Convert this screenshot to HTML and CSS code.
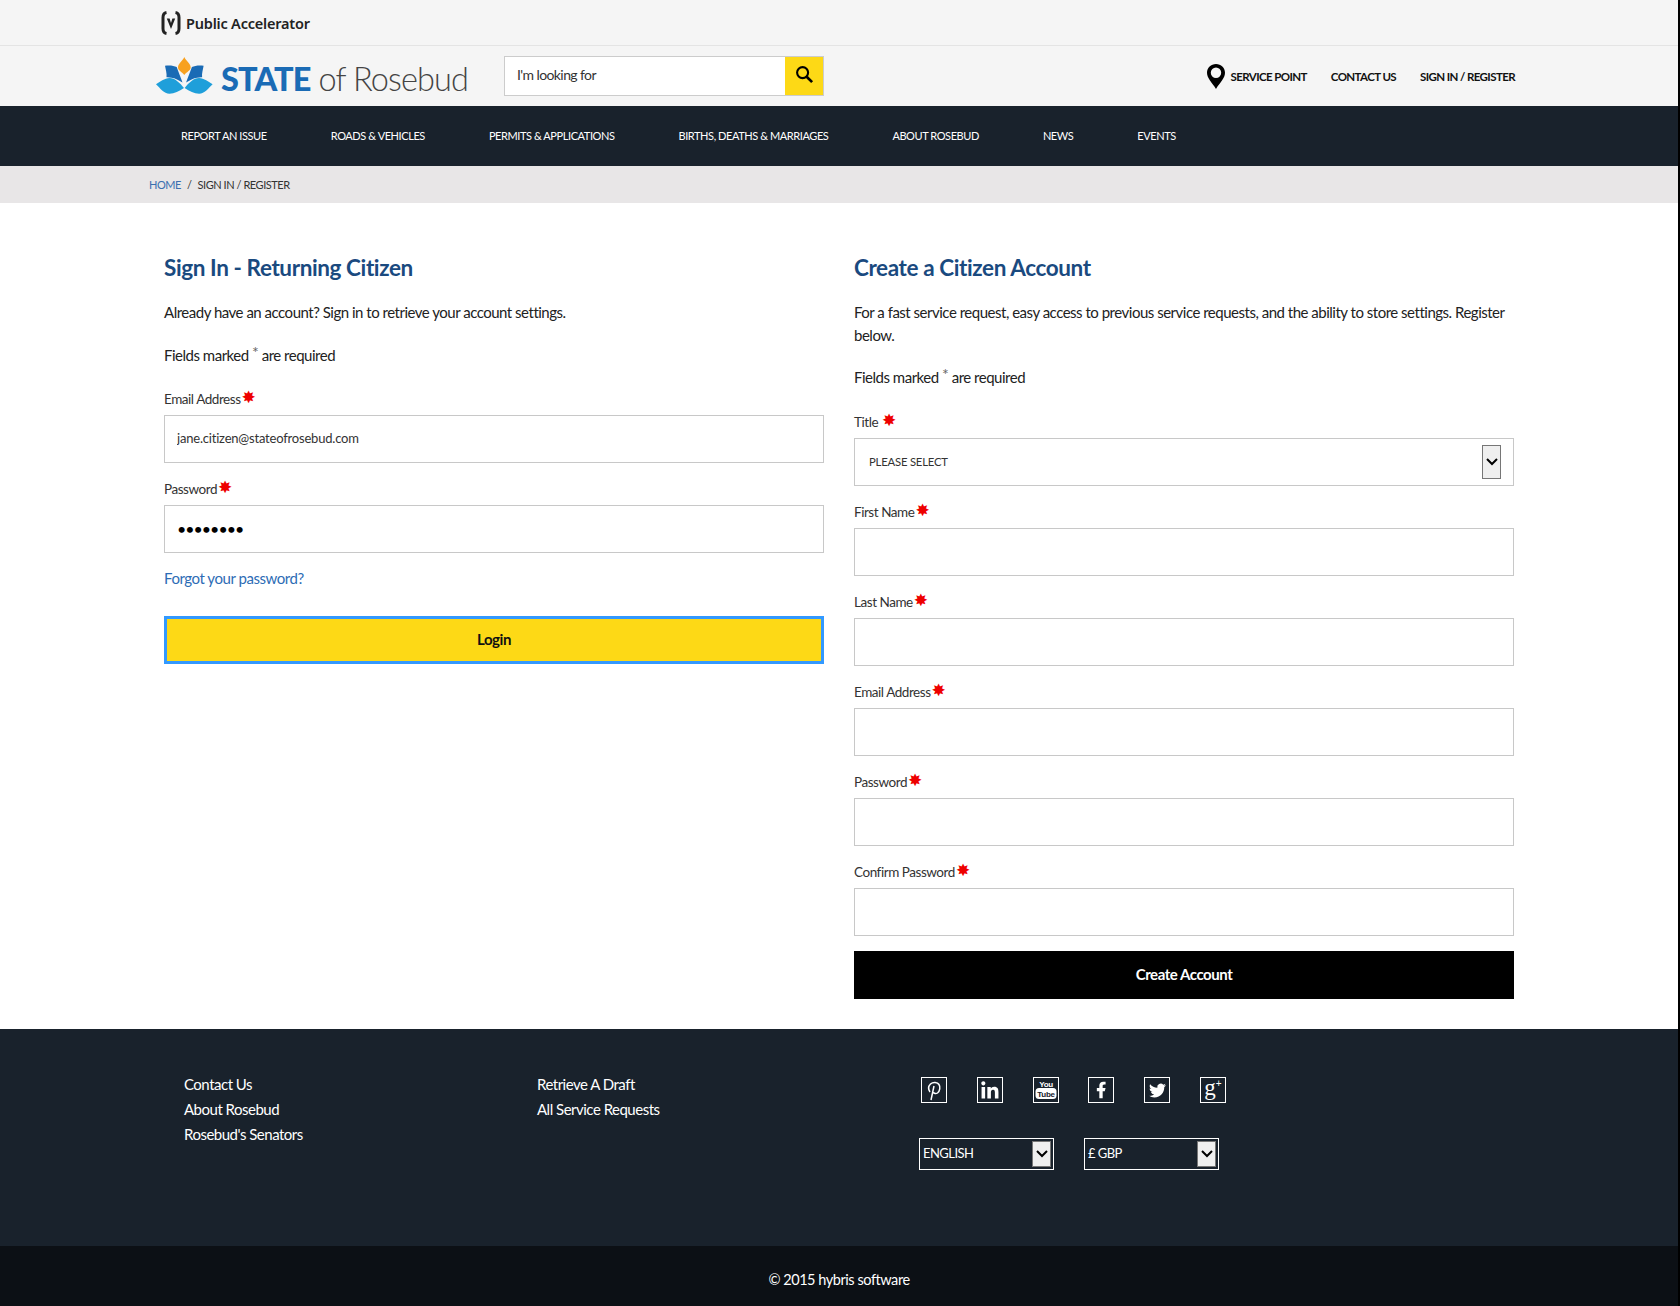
FILE: index.html
```html
<!DOCTYPE html>
<html lang="en">
<head>
  <meta charset="UTF-8" />
  <meta name="viewport" content="width=device-width, initial-scale=1.0"/>
  <title>Sign In / Register | State of Rosebud</title>
  <link rel="stylesheet" href="styles.css">
</head>
<body>
<div class="page">

  <div class="topbar">
    <div class="container">
      <a class="brand-mini" href="#">
        <svg class="brand-mini-icon" viewBox="0 0 20 24" width="20" height="24">
          <path d="M5.500 1.500C2.500 2 2 4 2 6.500v11c0 2.500 .5 4.500 3.500 5M14.500 1.500c3 .5 3.500 2.500 3.500 5v11c0 2.500-.5 4.500-3.500 5" fill="none" stroke="#222" stroke-width="3"/>
          <path d="M5.800 7.500l4.200 10.500 4.200-10.500h-2.800l-1.400 4.500-1.400-4.500z" fill="#222"/>
        </svg>
        <span>Public Accelerator</span>
      </a>
    </div>
  </div>

  <header class="header">
    <div class="container header-row">
      <a class="logo" href="#">
        <svg class="logo-mark" viewBox="0 0 58 37" width="58" height="37">
          <path d="M28.300 0C30 4 34.700 6.500 34.700 10.500 34.700 13.500 31 14.500 28.300 18 25.600 14.500 22 13.500 22 10.500 22 6.500 26.600 4 28.300 0z" fill="#f8a11f"/>
          <path d="M9 8.700C13 8 18 8.500 20.700 10c1.500 4.500 4 10 5.800 15.500C23 23.500 19 21 15.500 20.800 13.500 20.500 12 20 10.500 20.300 11 16 9.500 12 9 8.700z" fill="#1a6bb5"/>
          <path d="M47.600 8.700C43.600 8 38.600 8.500 35.900 10c-1.500 4.500-4 10-5.800 15.500 3.500-2 7.500-4.500 11-4.700 2-.3 3.500-.8 5-.5-.5-4.300 1.100-8.300 1.500-11.600z" fill="#1a6bb5"/>
          <path d="M0 27.300C4 25 8.500 21 13.500 21 19 21 24 26 28 31 23 34 18.500 36.800 13.500 36.800 8 36.800 4 31 0 27.300z" fill="#1f9fda"/>
          <path d="M56.600 27.300C52.600 25 48.100 21 43.100 21 37.600 21 32.600 26 28.600 31c5 3 9.500 5.800 14.500 5.800 5.500 0 9.500-5.800 13.500-9.500z" fill="#1f9fda"/>
        </svg>
        <span class="logo-text"><b>STATE</b> of Rosebud</span>
      </a>
      <form class="search">
        <input class="search-input" type="text" placeholder="I'm looking for" />
        <button class="search-btn" type="button" aria-label="Search">
          <svg viewBox="0 0 20 20" width="19" height="19">
            <circle cx="8" cy="8" r="5.800" fill="none" stroke="#000" stroke-width="2.200"/>
            <path d="M12.300 12.300l5.700 5.700" stroke="#000" stroke-width="2.800"/>
          </svg>
        </button>
      </form>
      <nav class="account-nav">
        <a class="service-point" href="#">
          <svg viewBox="0 0 18 25" width="18" height="25">
            <path fill-rule="evenodd" d="M9 0c5 0 9 3.800 9 8.800 0 5.500-5 9.700-9 16.200C5 18.500 0 14.300 0 8.800 0 3.800 4 0 9 0zm0 3.500a5.200 5.200 0 100 10.400A5.200 5.200 0 009 3.500z" fill="#000"/>
          </svg>
          <span>SERVICE POINT</span>
        </a>
        <a href="#">CONTACT US</a>
        <a href="#">SIGN IN / REGISTER</a>
      </nav>
    </div>
  </header>

  <nav class="main-nav">
    <div class="container main-nav-row">
      <a href="#">REPORT AN ISSUE</a>
      <a href="#">ROADS &amp; VEHICLES</a>
      <a href="#">PERMITS &amp; APPLICATIONS</a>
      <a href="#">BIRTHS, DEATHS &amp; MARRIAGES</a>
      <a href="#">ABOUT ROSEBUD</a>
      <a href="#">NEWS</a>
      <a href="#">EVENTS</a>
    </div>
  </nav>

  <div class="breadcrumb">
    <div class="container">
      <a href="#">HOME</a><span class="crumb-sep">/</span><span>SIGN IN / REGISTER</span>
    </div>
  </div>

  <main class="main container">
    <section class="col">
      <h2>Sign In - Returning Citizen</h2>
      <p>Already have an account? Sign in to retrieve your account settings.</p>
      <p>Fields marked <span class="mark">*</span> are required</p>
      <form class="form">
        <label class="field-label">Email Address<span class="req">✸</span></label>
        <input class="field" type="text" value="jane.citizen@stateofrosebud.com" />
        <label class="field-label">Password<span class="req">✸</span></label>
        <input class="field field-password" type="password" value="password" />
        <a class="forgot" href="#">Forgot your password?</a>
        <button class="btn btn-login" type="button">Login</button>
      </form>
    </section>

    <section class="col">
      <h2>Create a Citizen Account</h2>
      <p>For a fast service request, easy access to previous service requests, and the ability to store settings. Register below.</p>
      <p>Fields marked <span class="mark">*</span> are required</p>
      <form class="form">
        <label class="field-label">Title <span class="req">✸</span></label>
        <div class="field select-field">
          <span>PLEASE SELECT</span>
          <span class="arrow arrow-tall">
            <svg viewBox="0 0 12 8" width="12" height="8"><path d="M1 1l5 5 5-5" fill="none" stroke="#000" stroke-width="2"/></svg>
          </span>
        </div>
        <label class="field-label">First Name<span class="req">✸</span></label>
        <input class="field" type="text" />
        <label class="field-label">Last Name<span class="req">✸</span></label>
        <input class="field" type="text" />
        <label class="field-label">Email Address<span class="req">✸</span></label>
        <input class="field" type="text" />
        <label class="field-label">Password<span class="req">✸</span></label>
        <input class="field" type="password" />
        <label class="field-label">Confirm Password<span class="req">✸</span></label>
        <input class="field field-last" type="password" />
        <button class="btn btn-create" type="button">Create Account</button>
      </form>
    </section>
  </main>

  <footer class="footer">
    <div class="container footer-row">
      <ul class="footer-links">
        <li><a href="#">Contact Us</a></li>
        <li><a href="#">About Rosebud</a></li>
        <li><a href="#">Rosebud's Senators</a></li>
      </ul>
      <ul class="footer-links footer-links-2">
        <li><a href="#">Retrieve A Draft</a></li>
        <li><a href="#">All Service Requests</a></li>
      </ul>
      <div class="footer-side">
        <div class="social">
          <a href="#" aria-label="Pinterest">
            <svg viewBox="0 0 24 24" width="24" height="24"><path d="M8 14c-2-3-1.500-6 .5-8 2.500-2.300 7-2 8.500.5 1.500 2.300 1 6.500-1.500 8.500-1.500 1-3.500.8-4-.8M12 8l-3 14" fill="none" stroke="#fff" stroke-width="1.500"/></svg>
          </a>
          <a href="#" aria-label="LinkedIn">
            <svg viewBox="0 0 24 24" width="24" height="24"><path d="M20.447 20.452h-3.554v-5.569c0-1.328-.027-3.037-1.852-3.037-1.853 0-2.136 1.445-2.136 2.939v5.667H9.351V9h3.414v1.561h.046c.477-.9 1.637-1.850 3.370-1.850 3.601 0 4.267 2.370 4.267 5.455v6.286zM5.337 7.433c-1.144 0-2.063-.926-2.063-2.065 0-1.138.92-2.063 2.063-2.063 1.140 0 2.064.925 2.064 2.063 0 1.139-.925 2.065-2.064 2.065zm1.782 13.019H3.555V9h3.564v11.452z" fill="#fff"/></svg>
          </a>
          <a href="#" aria-label="YouTube">
            <svg viewBox="0 0 24 24" width="24" height="24">
              <text class="yt-you" x="12" y="8.500" text-anchor="middle">You</text>
              <rect x="1.500" y="10" width="21" height="11" rx="3.500" fill="#fff"/>
              <text class="yt-tube" x="12" y="18.500" text-anchor="middle">Tube</text>
            </svg>
          </a>
          <a href="#" aria-label="Facebook">
            <svg viewBox="0 0 24 24" width="20" height="20"><path d="M14 13.500h2.500l1-4H14v-2c0-1.030 0-2 2-2h1.500V2.140c-.326-.043-1.557-.14-2.857-.14C11.928 2 10 3.657 10 6.700v2.800H7v4h3V22h4v-8.500z" fill="#fff"/></svg>
          </a>
          <a href="#" aria-label="Twitter">
            <svg viewBox="0 0 24 24" width="17" height="17"><path d="M23.953 4.570a10 10 0 01-2.825.775 4.958 4.958 0 002.163-2.723c-.951.555-2.005.959-3.127 1.184a4.920 4.920 0 00-8.384 4.482C7.690 8.095 4.067 6.130 1.640 3.162a4.822 4.822 0 00-.666 2.475c0 1.710.870 3.213 2.188 4.096a4.904 4.904 0 01-2.228-.616v.060a4.923 4.923 0 003.946 4.827 4.996 4.996 0 01-2.212.085 4.936 4.936 0 004.604 3.417 9.867 9.867 0 01-6.102 2.105c-.390 0-.779-.023-1.170-.067a13.995 13.995 0 007.557 2.209c9.053 0 13.998-7.496 13.998-13.985 0-.210 0-.420-.015-.630A9.935 9.935 0 0024 4.590z" fill="#fff"/></svg>
          </a>
          <a class="gplus" href="#" aria-label="Google Plus">g<span class="gplus-sign">+</span></a>
        </div>
        <div class="footer-selects">
          <div class="footer-select">
            <span>ENGLISH</span>
            <span class="arrow arrow-short">
              <svg viewBox="0 0 12 8" width="12" height="8"><path d="M1 1l5 5 5-5" fill="none" stroke="#000" stroke-width="2"/></svg>
            </span>
          </div>
          <div class="footer-select">
            <span>£ GBP</span>
            <span class="arrow arrow-short">
              <svg viewBox="0 0 12 8" width="12" height="8"><path d="M1 1l5 5 5-5" fill="none" stroke="#000" stroke-width="2"/></svg>
            </span>
          </div>
        </div>
      </div>
    </div>
  </footer>

  <div class="copyright">© 2015 hybris software</div>

</div>
</body>
</html>
```

FILE: styles.css
```css
* {
  box-sizing: border-box;
}
body {
  margin: 0;
  background: #000;
  font-family: Lato, "Open Sans", sans-serif;
  color: #222;
  font-size: 15px;
  letter-spacing: -0.45px;
}
a {
  text-decoration: none;
  color: inherit;
}
.page {
  width: 1678px;
  background: #fff;
}
.container {
  width: 1380px;
  margin: 0 auto;
}

/* top bar */
.topbar {
  height: 46px;
  background: #f5f5f5;
  border-bottom: 1px solid #e4e4e4;
}
.brand-mini {
  display: inline-flex;
  align-items: center;
  gap: 5px;
  height: 45px;
  margin-left: 12px;
  font-family: "Noto Sans", sans-serif;
  font-weight: 600;
  font-size: 14.500px;
  letter-spacing: -0.2px;
  color: #222;
}

/* header */
.header {
  height: 60px;
  background: #f5f5f5;
}
.header-row {
  display: flex;
  align-items: center;
  height: 60px;
}
.logo {
  display: flex;
  align-items: center;
  gap: 7px;
  width: 348px;
  margin-left: 7px;
  margin-top: -1px;
}
.logo-text {
  padding-top: 6px;
  font-size: 32.500px;
  font-weight: 300;
  letter-spacing: -0.9px;
  color: #444;
  white-space: nowrap;
}
.logo-text b {
  font-weight: 900;
  color: #1a6bb5;
}
.search {
  display: flex;
  width: 320px;
  height: 40px;
  border: 1px solid #ccc;
}
.search-input {
  flex: 1;
  min-width: 0;
  border: 0;
  padding: 0 12px 3px;
  background: #fff;
  font: inherit;
  font-size: 14px;
  letter-spacing: -0.6px;
}
.search-input::placeholder {
  color: #333;
  opacity: 1;
}
.search-btn {
  width: 38px;
  border: 0;
  padding: 0;
  background: #fdd916;
}
.account-nav {
  display: flex;
  align-items: center;
  margin-left: auto;
  margin-right: 14px;
  gap: 24px;
  font-weight: 700;
  font-size: 11.500px;
  letter-spacing: -0.6px;
  color: #111;
}
.service-point {
  display: flex;
  align-items: center;
  gap: 6px;
}

/* main nav */
.main-nav {
  height: 60px;
  background: #19222c;
}
.main-nav-row {
  display: flex;
  height: 60px;
  padding-bottom: 2px;
  align-items: center;
}
.main-nav a {
  padding: 0 32px;
  color: #fff;
  font-size: 11px;
  letter-spacing: -0.42px;
}

/* breadcrumb */
.breadcrumb {
  height: 37px;
  line-height: 37px;
  background: #e8e6e7;
  font-size: 11px;
  letter-spacing: -0.45px;
  color: #333;
}
.breadcrumb a {
  color: #3a6fb0;
}
.crumb-sep {
  margin: 0 6px;
}

/* forms */
.main {
  display: flex;
  height: 826px;
  padding-top: 50px;
  background: #fff;
}
.col {
  width: 690px;
  padding: 0 15px;
}
.col h2 {
  margin: 0 0 18px;
  font-size: 22.500px;
  line-height: 30px;
  font-weight: 700;
  letter-spacing: -0.4px;
  color: #1a4a7f;
}
.col p {
  margin: 0 0 20px;
  line-height: 22.500px;
  letter-spacing: -0.49px;
}
.form {
  margin-top: 24px;
}
.mark {
  font-size: 16px;
  line-height: 0;
  position: relative;
  top: -3px;
  color: #666;
}
.field-label {
  display: block;
  height: 17px;
  margin-bottom: 8px;
  line-height: 19px;
  font-size: 13.500px;
  letter-spacing: -0.45px;
  color: #333;
}
.req {
  margin-left: 1px;
  font-family: "DejaVu Sans", sans-serif;
  font-size: 17px;
  line-height: 0;
  vertical-align: 1px;
  color: #e00;
}
.field {
  display: block;
  width: 100%;
  height: 48px;
  margin-bottom: 17px;
  padding: 0 12px 2px;
  border: 1px solid #c8c8c8;
  background: #fff;
  font: inherit;
  font-size: 13px;
  letter-spacing: -0.2px;
  color: #333;
}
.field-password {
  font-size: 16px;
  letter-spacing: -1px;
  color: #000;
}
.select-field {
  display: flex;
  align-items: center;
  justify-content: space-between;
  padding: 0 12px 0 14px;
  font-size: 11.300px;
}
.arrow {
  display: flex;
  align-items: center;
  justify-content: center;
  width: 19px;
  background: #efefef;
  border: 1px solid #767676;
}
.arrow-tall {
  height: 34px;
}
.arrow-short {
  height: 26px;
}
.forgot {
  display: block;
  height: 22px;
  margin-top: -3px;
  margin-bottom: 27px;
  line-height: 22px;
  color: #2d6cb5;
}
.btn {
  display: block;
  width: 100%;
  height: 48px;
  padding-bottom: 2px;
  font: inherit;
  font-weight: 700;
  font-size: 15px;
  letter-spacing: -0.45px;
  cursor: pointer;
}
.btn-login {
  padding-bottom: 4px;
  border: 3px solid #3399ff;
  background: #fdd916;
  color: #111;
}
.btn-create {
  border: 0;
  background: #000;
  color: #fff;
}
.field-last {
  margin-bottom: 15px;
}

/* footer */
.footer {
  height: 217px;
  background: #19222c;
}
.footer-row {
  display: flex;
  padding-top: 43px;
}
.footer-links {
  width: 353px;
  margin: 0;
  padding: 0 0 0 35px;
  list-style: none;
  color: #fff;
  letter-spacing: -0.5px;
}
.footer-links li {
  height: 25px;
  line-height: 25px;
}
.footer-links-2 {
  width: 417px;
  padding-left: 35px;
}
.footer-side {
  padding-top: 5px;
}
.social {
  display: flex;
  gap: 29.800px;
  margin-left: 2px;
}
.social a {
  display: flex;
  align-items: center;
  justify-content: center;
  width: 26px;
  height: 26px;
  border: 1px solid #fff;
}
.yt-you,
.yt-tube {
  font-family: "Liberation Sans", sans-serif;
  font-weight: 700;
  letter-spacing: -0.3px;
}
.yt-you {
  font-size: 8px;
  fill: #fff;
}
.yt-tube {
  font-size: 8px;
  fill: #19222c;
}
.social .gplus {
  align-items: flex-start;
  font-family: "Liberation Serif", serif;
  font-size: 23px;
  line-height: 20px;
  letter-spacing: 0;
  color: #fff;
}
.gplus-sign {
  font-family: "Liberation Sans", sans-serif;
  font-size: 10px;
  line-height: 11px;
}
.footer-selects {
  display: flex;
  gap: 30px;
  margin-top: 35px;
}
.footer-select {
  display: flex;
  align-items: center;
  justify-content: space-between;
  width: 135px;
  height: 32px;
  padding: 0 2px 0 3px;
  border: 1px solid #fff;
  color: #fff;
  font-size: 13px;
  letter-spacing: -0.55px;
}
.footer-select > span:first-child {
  margin-bottom: 2px;
}

/* copyright */
.copyright {
  height: 60px;
  line-height: 68px;
  text-align: center;
  background: #0c1015;
  color: #fff;
  font-size: 14.500px;
}
```
